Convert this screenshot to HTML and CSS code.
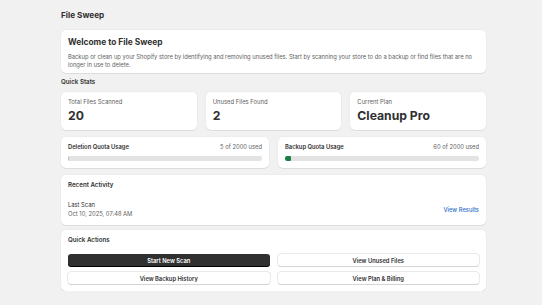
FILE: index.html
```html
<!DOCTYPE html>
<html lang="en">
<head>
  <meta charset="UTF-8">
  <meta name="viewport" content="width=device-width, initial-scale=1.0">
  <title>File Sweep</title>
  <link rel="stylesheet" href="styles.css">
</head>
<body>
  <div class="page">
    <h1 class="page-title">File Sweep</h1>

    <div class="card welcome">
      <h2>Welcome to File Sweep</h2>
      <p>Backup or clean up your Shopify store by identifying and removing unused files. Start by scanning your store to do a backup or find files that are no longer in use to delete.</p>
    </div>

    <h3 class="section-title">Quick Stats</h3>
    <div class="stats">
      <div class="card stat">
        <div class="stat-label">Total Files Scanned</div>
        <div class="stat-value">20</div>
      </div>
      <div class="card stat">
        <div class="stat-label">Unused Files Found</div>
        <div class="stat-value">2</div>
      </div>
      <div class="card stat">
        <div class="stat-label">Current Plan</div>
        <div class="stat-value">Cleanup Pro</div>
      </div>
    </div>

    <div class="quotas">
      <div class="card quota">
        <div class="quota-head">
          <span class="quota-title">Deletion Quota Usage</span>
          <span class="quota-count">5 of 2000 used</span>
        </div>
        <div class="bar"><div class="bar-fill gray" style="width: 0.5%"></div></div>
      </div>
      <div class="card quota">
        <div class="quota-head">
          <span class="quota-title">Backup Quota Usage</span>
          <span class="quota-count">60 of 2000 used</span>
        </div>
        <div class="bar"><div class="bar-fill green" style="width: 3%"></div></div>
      </div>
    </div>

    <div class="card activity">
      <h4 class="card-title">Recent Activity</h4>
      <div class="activity-row">
        <div>
          <div class="scan-label">Last Scan</div>
          <div class="scan-date">Oct 10, 2025, 07:48 AM</div>
        </div>
        <a href="#" class="link">View Results</a>
      </div>
    </div>

    <div class="card actions">
      <h4 class="card-title">Quick Actions</h4>
      <div class="action-grid">
        <button class="btn primary">Start New Scan</button>
        <button class="btn">View Unused Files</button>
        <button class="btn">View Backup History</button>
        <button class="btn">View Plan &amp; Billing</button>
      </div>
    </div>
  </div>
</body>
</html>
```

FILE: styles.css
```css
body {
  margin: 0;
  background-color: #f1f1f1;
  font-family: Inter, "Noto Sans", sans-serif;
  color: #303030;
}
.page {
  width: 425px;
  margin-left: 61px;
  padding-top: 9px;
}
.page-title {
  margin: 0 0 9px 0;
  font-size: 8.2px;
  font-weight: 700;
  line-height: 12px;
}
.card {
  background: white;
  border-radius: 5px;
  box-shadow: 0 1px 0 rgba(26, 26, 26, 0.07), 0 0 0 0.5px rgba(0, 0, 0, 0.04);
  box-sizing: border-box;
}
.welcome {
  padding: 5px 7px 5px;
}
.welcome h2 {
  margin: 0 0 4px 0;
  font-size: 8.4px;
  font-weight: 700;
  line-height: 14px;
}
.welcome p {
  margin: 0;
  font-size: 5.8px;
  line-height: 7.5px;
  color: #616161;
}
.section-title {
  margin: 3px 0 0 0;
  font-size: 6.2px;
  font-weight: 600;
  line-height: 11px;
}
.stats {
  display: grid;
  grid-template-columns: 1fr 1fr 1fr;
  gap: 9px;
  margin-top: 5px;
}
.stat {
  height: 38px;
  padding: 6px 7px;
}
.stat-label {
  font-size: 5.9px;
  line-height: 7px;
  color: #616161;
}
.stat-value {
  margin-top: 3px;
  font-size: 12.2px;
  font-weight: 700;
  line-height: 16px;
}
.quotas {
  display: grid;
  grid-template-columns: 1fr 1fr;
  gap: 9px;
  margin-top: 7px;
}
.quota {
  height: 31px;
  padding: 6px 7px;
}
.quota-head {
  display: flex;
  justify-content: space-between;
  align-items: center;
  line-height: 8px;
}
.quota-title {
  font-size: 5.8px;
  font-weight: 600;
}
.quota-count {
  font-size: 5.8px;
  color: #616161;
}
.bar {
  margin-top: 5px;
  height: 4.5px;
  border-radius: 2px;
  background-color: #e3e3e3;
  overflow: hidden;
}
.bar-fill {
  height: 100%;
  border-radius: 1px;
}
.bar-fill.gray {
  min-width: 1px;
  background-color: #b5b5b5;
}
.bar-fill.green {
  background-color: #1a7f4b;
}
.activity {
  margin-top: 7px;
  height: 50px;
  padding: 5px 7px;
}
.card-title {
  margin: 0;
  font-size: 6.2px;
  font-weight: 600;
  line-height: 9px;
}
.activity-row {
  display: flex;
  justify-content: space-between;
  align-items: center;
  margin-top: 11px;
}
.scan-label {
  font-size: 5.8px;
  line-height: 9px;
}
.scan-date {
  font-size: 5.8px;
  line-height: 9px;
  color: #616161;
}
.link {
  font-size: 5.8px;
  font-weight: 500;
  color: #2c6ecb;
  text-decoration: none;
}
.actions {
  margin-top: 5px;
  height: 61px;
  padding: 5px 7px;
}
.action-grid {
  display: grid;
  grid-template-columns: 1fr 1fr;
  column-gap: 8px;
  row-gap: 6px;
  margin-top: 10px;
}
.btn {
  height: 12px;
  padding: 0;
  border: none;
  border-radius: 3px;
  background: white;
  box-shadow: 0 0 0 0.5px #d4d4d4, 0 1px 0 #d4d4d4;
  font-family: Inter, "Noto Sans", sans-serif;
  font-size: 5.8px;
  font-weight: 600;
  color: #303030;
}
.btn.primary {
  background-color: #303030;
  color: white;
  box-shadow: 0 1px 0 #000;
}
```
